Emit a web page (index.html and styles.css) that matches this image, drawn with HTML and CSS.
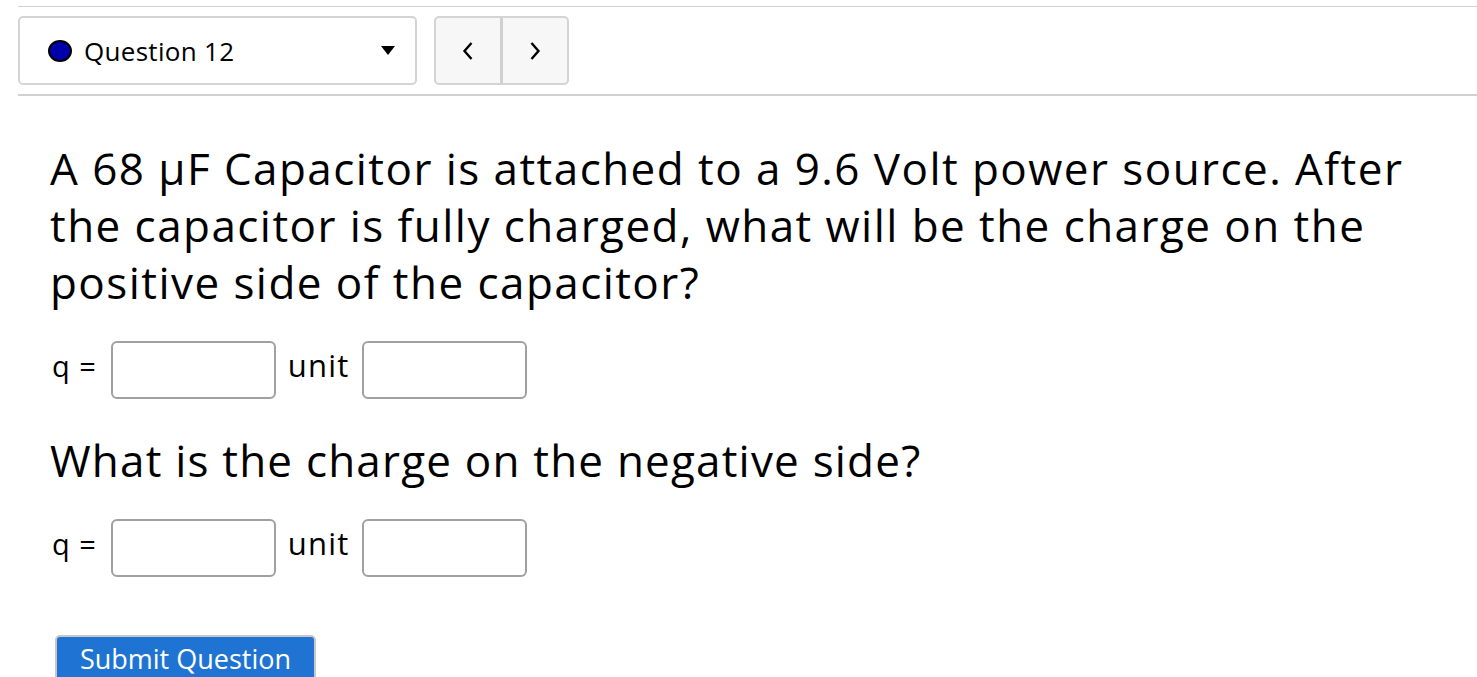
FILE: index.html
```html
<!DOCTYPE html>
<html lang="en">

<head>
    <meta charset="UTF-8">
    <title>Question 12</title>
    <link rel="stylesheet" href="styles.css">
</head>

<body>
    <div class="nav-bar">
        <div class="question-select">
            <span class="status-dot"></span>
            <span class="question-name">Question 12</span>
            <span class="caret"></span>
        </div>
        <div class="pager">
            <button class="pager-btn" aria-label="Previous">
                <svg width="12" height="20" viewBox="0 0 12 20"><polyline points="9.5,2 2.5,10 9.5,18" fill="none" stroke="#000" stroke-width="2.4"/></svg>
            </button>
            <button class="pager-btn" aria-label="Next">
                <svg width="12" height="20" viewBox="0 0 12 20"><polyline points="2.5,2 9.5,10 2.5,18" fill="none" stroke="#000" stroke-width="2.4"/></svg>
            </button>
        </div>
    </div>

    <div class="question-body">
        <p class="prompt">A 68 μF Capacitor is attached to a 9.6 Volt power source. After the capacitor is fully charged, what will be the charge on the positive side of the capacitor?</p>

        <div class="answer-row">
            <span class="label">q =</span>
            <input class="answer-box" type="text">
            <span class="label">unit</span>
            <input class="answer-box" type="text">
        </div>

        <p class="prompt second">What is the charge on the negative side?</p>

        <div class="answer-row">
            <span class="label">q =</span>
            <input class="answer-box" type="text">
            <span class="label">unit</span>
            <input class="answer-box" type="text">
        </div>

        <button class="submit-btn">Submit Question</button>
    </div>
</body>

</html>
```
FILE: styles.css
```css
/* base */
* {
    margin: 0;
    padding: 0;
    box-sizing: border-box;
    font-family: 'Open Sans', 'Noto Sans', sans-serif;
}

body {
    background-color: #fff;
    color: #000;
}

/* top navigation */
.nav-bar {
    display: flex;
    gap: 17px;
    margin: 6px 0 0 18px;
    padding: 9px 0;
    border-top: 1px solid #d0d0d0;
    border-bottom: 2px solid #d0d0d0;
}

.question-select {
    display: flex;
    align-items: center;
    width: 399px;
    height: 69px;
    padding: 0 20px 0 28px;
    border: 2px solid #d4d4d4;
    border-radius: 5px;
}

.status-dot {
    width: 24px;
    height: 22px;
    border-radius: 50%;
    background-color: #0000aa;
    border: 2px solid #000;
}

.question-name {
    flex: 1;
    margin-left: 12px;
    font-size: 26px;
    letter-spacing: 0.3px;
}

.caret {
    width: 0;
    height: 0;
    border-left: 7px solid transparent;
    border-right: 7px solid transparent;
    border-top: 9px solid #000;
}

.pager {
    display: flex;
    width: 135px;
    height: 69px;
    border: 2px solid #d4d4d4;
    border-radius: 5px;
    background-color: #f7f7f7;
    overflow: hidden;
}

.pager-btn {
    flex: 1;
    display: flex;
    align-items: center;
    justify-content: center;
    border: none;
    background: transparent;
}

.pager-btn + .pager-btn {
    border-left: 3px solid #d0d0d0;
}

/* question */
.question-body {
    padding: 0 25px 0 50px;
}

.prompt {
    margin-top: 44px;
    font-size: 44px;
    line-height: 57px;
    letter-spacing: 1.45px;
}

.prompt.second {
    margin-top: 33px;
    letter-spacing: 1.2px;
}

.answer-row {
    display: flex;
    align-items: center;
    gap: 12px;
    margin-top: 30px;
    padding-left: 2px;
}

.label {
    font-size: 29px;
    letter-spacing: 1px;
    padding-bottom: 10px;
}

.answer-row .label:first-child {
    margin-right: 2px;
}

.answer-row .label + .answer-box + .label {
    font-size: 31px;
    letter-spacing: 1.2px;
}

.answer-box {
    flex: none;
    width: 165px;
    height: 58px;
    border: 2px solid #a0a0a0;
    border-radius: 6px;
}

.submit-btn {
    display: block;
    margin: 58px 0 0 5px;
    width: 261px;
    height: 50px;
    padding-bottom: 4px;
    background-color: #1f74d3;
    color: #fff;
    font-size: 27px;
    border: 2px solid #c8c8c8;
    border-radius: 5px;
}
```
